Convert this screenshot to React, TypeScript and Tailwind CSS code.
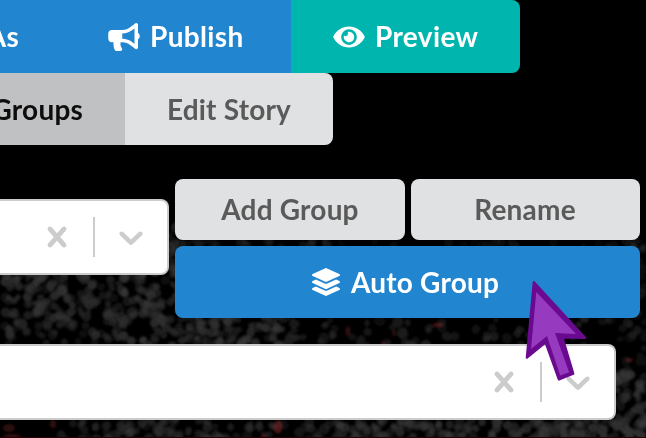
import React from 'react';
import { FaBullhorn, FaEye, FaLayerGroup } from 'react-icons/fa';

type Cell = { x: number; y: number; rx: number; ry: number; a: number; fill: string; o: number };

function makeCells(): Cell[] {
  let s = 7;
  const rnd = () => {
    s = (s * 16807) % 2147483647;
    return s / 2147483647;
  };
  const cells: Cell[] = [];
  const scatter = (x0: number, y0: number, x1: number, y1: number, n: number, o: number) => {
    for (let i = 0; i < n; i++) {
      const r = 3 + rnd() * 2.4;
      cells.push({
        x: x0 + rnd() * (x1 - x0),
        y: y0 + rnd() * (y1 - y0),
        rx: r,
        ry: r * (0.75 + rnd() * 0.4),
        a: rnd() * 180,
        fill: rnd() > 0.4 ? '#363636' : '#2b2b2b',
        o: o * (0.4 + rnd() * 0.6),
      });
    }
  };
  scatter(5, 272, 284, 346, 430, 0.75);
  scatter(168, 220, 178, 275, 18, 0.5);
  scatter(178, 241, 330, 247, 22, 0.4);
  scatter(330, 241, 646, 247, 22, 0.25);
  scatter(288, 318, 646, 346, 70, 0.55);
  scatter(620, 240, 646, 375, 42, 0.4);
  scatter(612, 372, 646, 438, 65, 0.8);
  scatter(60, 420, 270, 440, 90, 0.6);
  scatter(270, 420, 340, 440, 20, 0.55);
  scatter(335, 420, 646, 440, 170, 0.8);
  return cells;
}

const cells = makeCells();

const redCells = [
  [278, 427, 4.5, 6.5, 0.6],
  [438, 325, 5, 2.5, 0.5],
  [348, 331, 2.5, 5, 0.35],
  [394, 333, 2, 3, 0.35],
  [383, 343, 3, 1.5, 0.35],
  [629, 360, 4, 2, 0.5],
  [53, 424, 3, 4, 0.4],
  [9, 428, 6, 4, 0.35],
  [12, 436, 9, 2, 0.4],
  [264, 436, 3, 3, 0.35],
];

function Specimen() {
  return (
    <svg className="absolute inset-0 h-[438px] w-[646px]" viewBox="0 0 646 438" aria-hidden="true">
      <defs>
        <filter id="soften" filterUnits="userSpaceOnUse" x="0" y="0" width="646" height="438">
          <feGaussianBlur stdDeviation="1" />
        </filter>
      </defs>
      <g filter="url(#soften)">
        {cells.map((c, i) => (
          <ellipse key={i} cx={c.x} cy={c.y} rx={c.rx} ry={c.ry} fill={c.fill} opacity={c.o} transform={`rotate(${c.a} ${c.x} ${c.y})`} />
        ))}
        {redCells.map(([x, y, rx, ry, o], i) => (
          <ellipse key={i} cx={x} cy={y} rx={rx} ry={ry} fill="#7a2424" opacity={o} />
        ))}
      </g>
      <path d="M0 437.5H646" stroke="#270007" />
    </svg>
  );
}

function SelectControls() {
  return (
    <>
      <svg className="size-10" viewBox="0 0 20 20" fill="#ccc">
        <path d="M14.348 14.849c-0.469 0.469-1.229 0.469-1.697 0l-2.651-3.030-2.651 3.029c-0.469 0.469-1.229 0.469-1.697 0-0.469-0.469-0.469-1.229 0-1.697l2.758-3.15-2.759-3.152c-0.469-0.469-0.469-1.228 0-1.697s1.228-0.469 1.697 0l2.652 3.031 2.651-3.031c0.469-0.469 1.228-0.469 1.697 0s0.469 1.229 0 1.697l-2.758 3.152 2.758 3.15c0.469 0.469 0.469 1.229 0 1.698z" />
      </svg>
      <span className="mx-4 h-10 w-0.5 bg-[#ccc]" />
      <svg className="size-10" viewBox="0 0 20 20" fill="#ccc">
        <path d="M4.516 7.548c0.436-0.446 1.043-0.481 1.576 0l3.908 3.747 3.908-3.747c0.533-0.481 1.141-0.446 1.574 0 0.436 0.445 0.408 1.197 0 1.615-0.406 0.418-4.695 4.502-4.695 4.502-0.217 0.223-0.502 0.335-0.787 0.335s-0.57-0.112-0.789-0.335c0 0-4.287-4.084-4.695-4.502s-0.436-1.17 0-1.615z" />
      </svg>
    </>
  );
}

export default function App() {
  return (
    <div className="relative h-[438px] w-[646px] overflow-hidden bg-black font-['Lato',sans-serif] text-[28px] leading-7 font-bold tracking-[0.2px]">
      <Specimen />
      <main className="relative flex flex-col">
        <div className="flex h-[73px] w-[520px] overflow-hidden rounded-r-lg text-white">
          <button className="flex w-[66px] items-center justify-end bg-[#2185d0] pr-[47px] pb-0.5 whitespace-nowrap">As</button>
          <button className="flex w-[225px] items-center bg-[#2185d0] pl-[42px]">
            <FaBullhorn className="mr-[10px] h-7 w-8" />
            <span className="pb-0.5 tracking-[0.35px]">Publish</span>
          </button>
          <button className="flex flex-1 items-center bg-[#00b5ad] pl-[42px]">
            <FaEye className="mr-[10px] h-7 w-8" />
            <span className="pb-0.5 tracking-[0.35px]">Preview</span>
          </button>
        </div>
        <div className="flex h-[72px] w-[333px] overflow-hidden rounded-r-lg">
          <button className="flex w-[125px] items-center justify-end bg-[#c0c1c2] pr-[42px] text-[#0d0d0d]">Groups</button>
          <button className="flex-1 bg-[#e0e1e2] text-[#5a5a5a]">Edit Story</button>
        </div>
        <div className="mt-[34px] flex items-center">
          <div className="mt-[-23px] flex h-[76px] w-[169px] items-center justify-end rounded-r-lg border-2 border-l-0 border-[#ccc] bg-white pr-4">
            <SelectControls />
          </div>
          <div className="ml-1.5 grid w-[465px] grid-cols-[230px_229px] gap-1.5">
            <button className="h-[61px] rounded-lg bg-[#e0e1e2] pb-0.5 text-[#5a5a5a]">Add Group</button>
            <button className="h-[61px] rounded-lg bg-[#e0e1e2] pr-px pb-0.5 text-[#5a5a5a]">Rename</button>
            <button className="col-span-2 flex h-[72px] items-center justify-center rounded-lg bg-[#2185d0] pr-[4px] text-white">
              <FaLayerGroup className="mr-[11px] size-7" />
              Auto Group
            </button>
          </div>
        </div>
        <div className="mt-[26px] flex h-[76px] w-[616px] items-center justify-end rounded-r-lg border-2 border-l-0 border-[#ccc] bg-white pr-4">
          <SelectControls />
        </div>
      </main>
      <svg className="absolute top-[275px] left-[515px] h-[115px] w-[85px]" viewBox="0 0 85 115" aria-hidden="true">
        <path d="M18.9 7.2 L70 62.8 L47.4 62.3 L58.2 98.7 L43.9 104.4 L30.6 67.4 L11.9 82.5 Z" fill="#6a0a91" stroke="#6a0a91" strokeWidth="2.4" strokeLinejoin="round" />
        <path d="M21.3 17 L61 59 L40 57.9 L54.1 97.2 L45.2 100.6 L32 61 L16 74 Z" fill="#963bbf" />
      </svg>
    </div>
  );
}
